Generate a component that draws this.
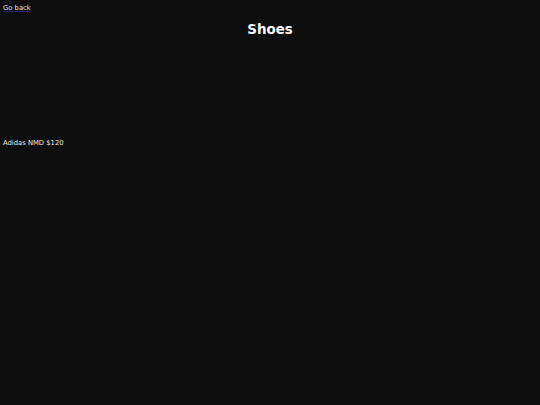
import React from "react";

export default function App() {
  return (
    <div
      className="min-h-[405px] w-full bg-[#0e0e0e] text-[#e8e8e8]"
      style={{ fontFamily: '"DejaVu Sans", sans-serif' }}
    >
      <div className="px-[3px] pt-[4px] text-[6.8px] leading-[8px]">
        <a href="#" className="text-[#e4e4f0] underline decoration-[#2a2a70]">
          Go back
        </a>
      </div>
      <h1 className="mt-[10px] text-center text-[13.4px] font-bold leading-[16px] text-white">
        Shoes
      </h1>
      <div className="h-[101px]" />
      <div className="px-[3px] text-[6.8px] leading-[8px]">Adidas NMD $120</div>
    </div>
  );
}
